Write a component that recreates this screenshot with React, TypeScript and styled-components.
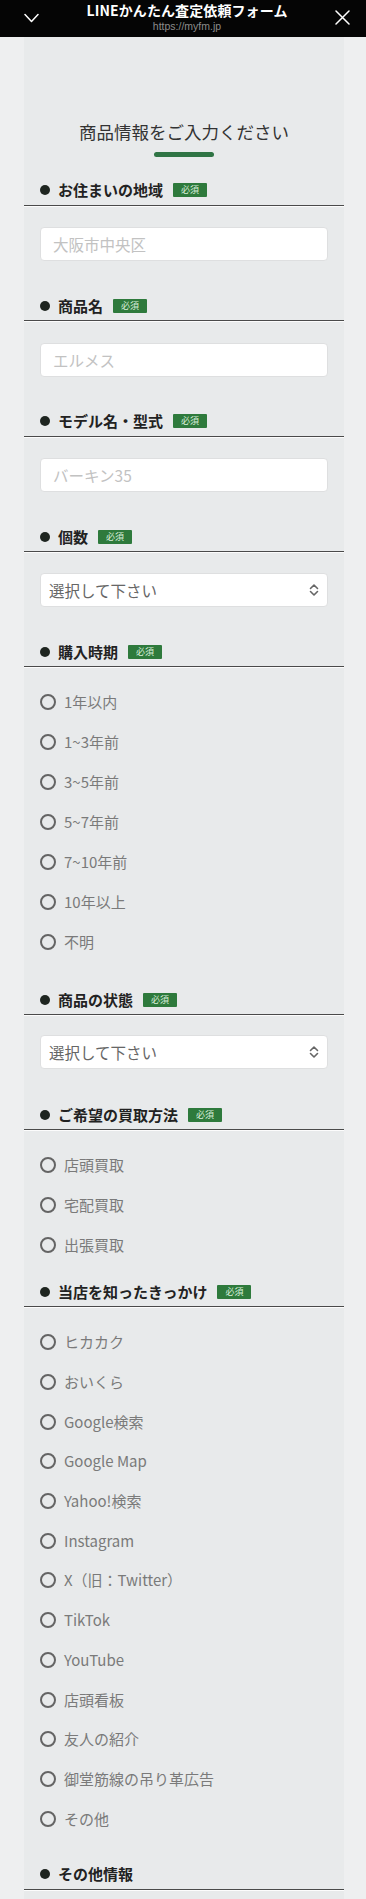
import React from "react";
import styled, { createGlobalStyle } from "styled-components";

const GlobalStyle = createGlobalStyle`
  html, body { margin: 0; padding: 0; }
  body {
    background: #eeeff0;
    font-family: "Noto Sans CJK JP", "Noto Sans", sans-serif;
    -webkit-font-smoothing: antialiased;
  }
  * { box-sizing: border-box; }
`;

const Header = styled.header`
  height: 37px;
  background: #050505;
  display: flex;
  align-items: center;
  justify-content: space-between;
  padding: 0 16px 0 24px;
`;

const HeaderIcon = styled.div`
  width: 15px;
  display: flex;
  align-items: center;
  justify-content: center;
  margin-top: -2px;
`;

const HeaderCenter = styled.div`
  display: flex;
  flex-direction: column;
  align-items: center;
  margin-top: -2px;
`;

const HeaderTitle = styled.div`
  color: #fff;
  font-weight: 700;
  font-size: 14px;
  line-height: 17px;
  letter-spacing: 0.1px;
`;

const HeaderUrl = styled.div`
  color: #8c8c8c;
  font-family: "Liberation Sans", Arial, sans-serif;
  font-size: 10.5px;
  line-height: 13px;
  margin-top: 1px;
`;

const Main = styled.main`
  padding: 0 22px 0 24px;
`;

const Card = styled.div`
  background: #e8eaeb;
  padding: 83px 0 60px;
`;

const Title = styled.h1`
  margin: 0;
  text-align: center;
  font-size: 17.5px;
  line-height: 24px;
  font-weight: 400;
  color: #333;
`;

const TitleBar = styled.div`
  width: 60px;
  height: 5px;
  border-radius: 3px;
  background: #2f7444;
  margin: 8px auto 18.5px;
`;

const Section = styled.section<{ $top: number; $bottom: number }>`
  display: flex;
  flex-direction: column;
  & > div:nth-child(2) {
    margin-top: ${(p) => p.$top}px;
  }
  margin-bottom: ${(p) => p.$bottom}px;
`;

const Heading = styled.div`
  height: 30px;
  display: flex;
  align-items: center;
  padding-left: 16px;
  border-bottom: 1px solid #4a4a4a;
  box-shadow: 0 1px 0 rgba(255, 255, 255, 0.85);
`;

const Dot = styled.span`
  width: 10px;
  height: 10px;
  border-radius: 50%;
  background: #1e2520;
  margin-right: 8px;
  flex: none;
`;

const HeadingText = styled.span`
  font-size: 15px;
  font-weight: 700;
  color: #222;
  line-height: 20px;
`;

const Badge = styled.span`
  margin-left: 10px;
  height: 14px;
  padding: 0 8px;
  background: #2e7a3c;
  color: #d9eedb;
  font-size: 9px;
  line-height: 14px;
  border-radius: 1px;
`;

const Body = styled.div`
  padding: 0 16px;
  display: flex;
  flex-direction: column;
`;

const Input = styled.input`
  width: 100%;
  height: 34px;
  border: 1px solid #dedfe0;
  border-radius: 4px;
  background: #fff;
  padding: 0 12px;
  font-family: "Noto Sans CJK JP", sans-serif;
  font-size: 15.5px;
  outline: none;
  &::placeholder {
    color: #c2c2c2;
  }
`;

const Select = styled.div`
  height: 34px;
  border: 1px solid #dedfe0;
  border-radius: 4px;
  background: #fff;
  display: flex;
  align-items: center;
  justify-content: space-between;
  padding: 0 7px 0 8px;
  font-size: 15.5px;
  color: #666;
`;

const RadioRow = styled.label<{ $h: number }>`
  height: ${(p) => p.$h}px;
  display: flex;
  align-items: center;
`;

const Circle = styled.span`
  width: 16px;
  height: 16px;
  border: 2px solid #646464;
  border-radius: 50%;
  flex: none;
`;

const RadioText = styled.span`
  margin-left: 8px;
  font-size: 15px;
  line-height: 20px;
  color: #7a7a7a;
`;

const UpDown = () => (
  <svg width="12" height="14" viewBox="0 0 12 14" fill="none" stroke="#666" strokeWidth="1.6" strokeLinecap="round" strokeLinejoin="round">
    <path d="M2.5 5.5 L6 2 L9.5 5.5" />
    <path d="M2.5 8.5 L6 12 L9.5 8.5" />
  </svg>
);

const HeaderChevron = () => (
  <svg width="15" height="10" viewBox="0 0 15 10" fill="none" stroke="#fff" strokeWidth="1.5" strokeLinecap="round" strokeLinejoin="round">
    <path d="M1 1.5 L7.5 8.5 L14 1.5" />
  </svg>
);

const HeaderClose = () => (
  <svg width="15" height="15" viewBox="0 0 15 15" fill="none" stroke="#fff" strokeWidth="1.5" strokeLinecap="round">
    <path d="M1 1 L14 14 M14 1 L1 14" />
  </svg>
);

type SectionProps = {
  title: string;
  required?: boolean;
  top: number;
  bottom: number;
  children?: React.ReactNode;
};

const FormSection = ({ title, required = true, top, bottom, children }: SectionProps) => (
  <Section $top={top} $bottom={bottom}>
    <Heading>
      <Dot />
      <HeadingText>{title}</HeadingText>
      {required && <Badge>必須</Badge>}
    </Heading>
    {children && <Body>{children}</Body>}
  </Section>
);

const RadioList = ({ items, h = 40 }: { items: string[]; h?: number }) => (
  <>
    {items.map((t) => (
      <RadioRow key={t} $h={h}>
        <Circle />
        <RadioText>{t}</RadioText>
      </RadioRow>
    ))}
  </>
);

const periods = ["1年以内", "1~3年前", "3~5年前", "5~7年前", "7~10年前", "10年以上", "不明"];
const methods = ["店頭買取", "宅配買取", "出張買取"];
const sources = [
  "ヒカカク",
  "おいくら",
  "Google検索",
  "Google Map",
  "Yahoo!検索",
  "Instagram",
  "X（旧：Twitter）",
  "TikTok",
  "YouTube",
  "店頭看板",
  "友人の紹介",
  "御堂筋線の吊り革広告",
  "その他",
];

export default function App() {
  return (
    <>
      <GlobalStyle />
      <Header>
        <HeaderIcon>
          <HeaderChevron />
        </HeaderIcon>
        <HeaderCenter>
          <HeaderTitle>LINEかんたん査定依頼フォーム</HeaderTitle>
          <HeaderUrl>https://myfm.jp</HeaderUrl>
        </HeaderCenter>
        <HeaderIcon>
          <HeaderClose />
        </HeaderIcon>
      </Header>
      <Main>
        <Card>
          <Title>商品情報をご入力ください</Title>
          <TitleBar />
          <FormSection title="お住まいの地域" top={21.5} bottom={30}>
            <Input placeholder="大阪市中央区" />
          </FormSection>
          <FormSection title="商品名" top={21.5} bottom={30}>
            <Input placeholder="エルメス" />
          </FormSection>
          <FormSection title="モデル名・型式" top={21.5} bottom={30}>
            <Input placeholder="バーキン35" />
          </FormSection>
          <FormSection title="個数" top={21} bottom={30}>
            <Select>
              <span>選択して下さい</span>
              <UpDown />
            </Select>
          </FormSection>
          <FormSection title="購入時期" top={14.5} bottom={23.5}>
            <div>
              <RadioList items={periods} />
            </div>
          </FormSection>
          <FormSection title="商品の状態" top={20} bottom={31}>
            <Select>
              <span>選択して下さい</span>
              <UpDown />
            </Select>
          </FormSection>
          <FormSection title="ご希望の買取方法" top={14.5} bottom={12.5}>
            <div>
              <RadioList items={methods} />
            </div>
          </FormSection>
          <FormSection title="当店を知ったきっかけ" top={15.5} bottom={21.5}>
            <div>
              <RadioList items={sources} h={39.7} />
            </div>
          </FormSection>
          <FormSection title="その他情報" required={false} top={0} bottom={40} />
        </Card>
      </Main>
    </>
  );
}
